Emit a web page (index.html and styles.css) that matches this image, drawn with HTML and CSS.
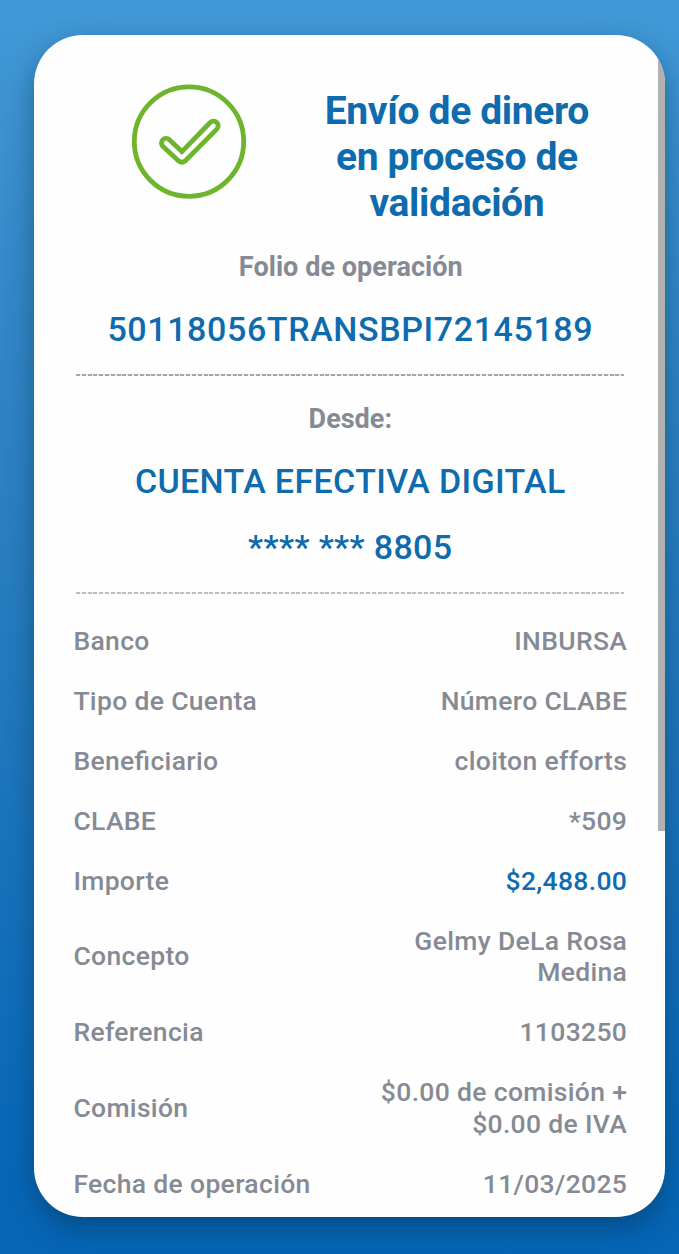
FILE: index.html
```html
<!DOCTYPE html>
<html lang="es">
<head>
  <meta charset="UTF-8" />
  <meta name="viewport" content="width=device-width, initial-scale=1.0" />
  <title>Comprobante</title>
  <link rel="stylesheet" href="styles.css">
</head>
<body>
  <div class="card">
    <div class="card-content">
      <div class="header">
        <svg class="check" viewBox="0 0 116 116" fill="none" stroke="#6cb52d">
          <circle cx="58" cy="57.6" r="54.7" stroke-width="4.8" />
          <path d="M38 56.3 L50.5 68.2 L78.8 39.1 A4.6 4.6 0 0 1 85.4 45.7 L53.8 77.5 Q50.5 80.2 47.2 77.5 L31.4 62.9 A4.6 4.6 0 0 1 38 56.3 Z" transform="translate(0.4 -0.6)" stroke-width="4.8" />
        </svg>
        <h1 class="title">Envío de dinero<br>en proceso de<br>validación</h1>
      </div>

      <p class="label folio-label">Folio de operación</p>
      <p class="value folio">50118056TRANSBPI72145189</p>
      <div class="divider"></div>

      <p class="label desde">Desde:</p>
      <p class="value account">CUENTA EFECTIVA DIGITAL</p>
      <p class="value number">**** *** 8805</p>
      <div class="divider light"></div>

      <div class="details">
        <div class="row"><span>Banco</span><span class="data">INBURSA</span></div>
        <div class="row"><span>Tipo de Cuenta</span><span class="data">Número CLABE</span></div>
        <div class="row"><span>Beneficiario</span><span class="data">cloiton efforts</span></div>
        <div class="row"><span>CLABE</span><span class="data">*509</span></div>
        <div class="row"><span>Importe</span><span class="data amount">$2,488.00</span></div>
        <div class="row"><span>Concepto</span><span class="data">Gelmy DeLa Rosa<br>Medina</span></div>
        <div class="row"><span>Referencia</span><span class="data">1103250</span></div>
        <div class="row"><span>Comisión</span><span class="data">$0.00 de comisión +<br>$0.00 de IVA</span></div>
        <div class="row"><span>Fecha de operación</span><span class="data">11/03/2025</span></div>
      </div>
    </div>
    <div class="scroll-thumb"></div>
  </div>
</body>
</html>
```
FILE: styles.css
```css
:root {
  --blue: #0d6bae;
  --gray: #858a94;
}

* {
  margin: 0;
  padding: 0;
  box-sizing: border-box;
}

body {
  height: 1254px;
  padding: 35px 13.6px 37px 34.4px;
  overflow: hidden;
  font-family: Roboto, sans-serif;
  font-weight: 500;
  color: var(--gray);
  background: linear-gradient(#4299d7, #3487c8 25%, #2279bd 55%, #0968b8 90%, #0565b6);
}

.card {
  position: relative;
  height: 1182px;
  border-radius: 49px;
  background: #fefefe;
  box-shadow: 0 11px 28px rgba(0, 50, 80, 0.48);
}

.card-content {
  height: 100%;
  padding: 49px 38.2px 0 39px;
}

.header {
  display: flex;
  height: 167px;
  padding-left: 58px;
}

.check {
  width: 116px;
  height: 116px;
  flex-shrink: 0;
}

.title {
  width: 300px;
  margin-left: 59.5px;
  padding-top: 4px;
  font-size: 39px;
  line-height: 46px;
  font-weight: 700;
  letter-spacing: -0.35px;
  text-align: center;
  white-space: nowrap;
  color: var(--blue);
}

.label {
  font-size: 27px;
  line-height: 32px;
  font-weight: 700;
  text-align: center;
}

.folio-label {
  padding-left: 1px;
  letter-spacing: 0.05px;
}

.value {
  font-size: 34px;
  line-height: 40px;
  letter-spacing: 0.36px;
  text-align: center;
  white-space: nowrap;
  color: var(--blue);
}

.folio {
  margin-top: 26px;
  letter-spacing: 0.6px;
}

.divider {
  height: 2px;
  margin: 25px 3px 0 2.6px;
  background: repeating-linear-gradient(90deg, #a6a6a6 0 4px, #ececec 4px 5.8px);
}

.light {
  background: repeating-linear-gradient(90deg, #bdbdbd 0 4px, #f4f4f4 4px 5.8px);
}

.desde {
  margin-top: 27px;
}

.account {
  margin-top: 26px;
}

.number {
  margin-top: 26px;
}

.details {
  display: flex;
  flex-direction: column;
  gap: 28.5px;
  margin-top: 30.6px;
  font-size: 26.5px;
  line-height: 31.5px;
  letter-spacing: 0.33px;
  font-feature-settings: "liga" 1;
}

.row {
  display: flex;
  justify-content: space-between;
  align-items: center;
}

.data {
  text-align: right;
}

.amount {
  color: var(--blue);
}

/* thumb is a background so the rounded corner clips it */
.scroll-thumb {
  position: absolute;
  inset: 0;
  border-radius: 49px;
  background: linear-gradient(#b0b0b0, #b0b0b0) right top / 7.5px 796px no-repeat;
}
```
